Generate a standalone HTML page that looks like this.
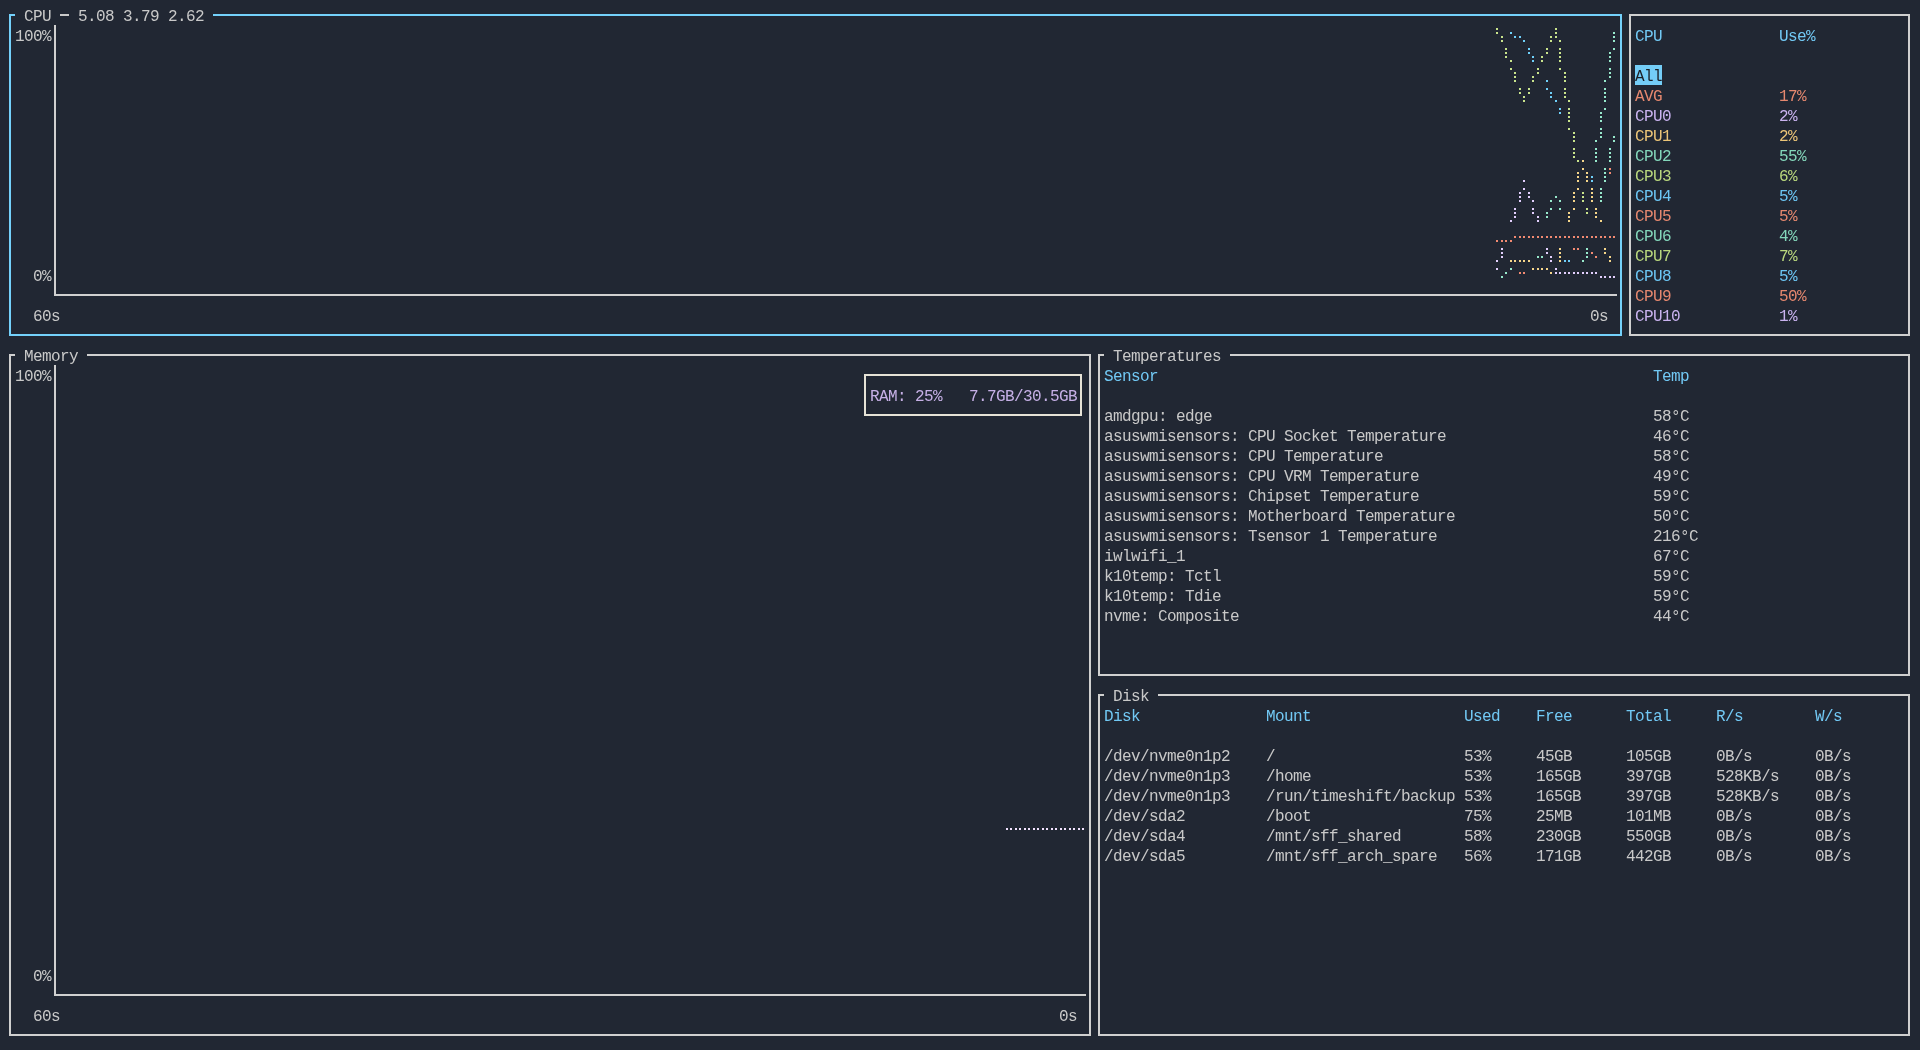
<!DOCTYPE html>
<html><head><meta charset="utf-8"><style>
html,body{margin:0;padding:0;}
body{width:1920px;height:1050px;background:#212733;position:relative;overflow:hidden;font-family:"Liberation Mono",monospace;}
.t{position:absolute;font-size:16px;letter-spacing:-0.6px;line-height:20px;height:20px;white-space:pre;margin-top:2px;transform:translateZ(0)}
.r{position:absolute}
svg{position:absolute;left:0;top:0}
</style></head><body>
<div class="r" style="left:9px;top:14px;width:6px;height:2px;background:#74d1fb"></div><div class="r" style="left:213px;top:14px;width:1409px;height:2px;background:#74d1fb"></div><div class="r" style="left:9px;top:334px;width:1613px;height:2px;background:#74d1fb"></div><div class="r" style="left:9px;top:14px;width:2px;height:322px;background:#74d1fb"></div><div class="r" style="left:1620px;top:14px;width:2px;height:322px;background:#74d1fb"></div><div class="t" style="left:24px;top:5px;color:#c9c9c9">CPU&#160;&#160;&#160;5.08&#160;3.79&#160;2.62</div><div class="r" style="left:60px;top:14px;width:9px;height:2px;background:#c9c9c9"></div><div class="t" style="left:15px;top:25px;color:#c9c9c9">100%</div><div class="t" style="left:33px;top:265px;color:#c9c9c9">0%</div><div class="r" style="left:54px;top:25px;width:2px;height:271px;background:#d0d0d0"></div><div class="r" style="left:54px;top:294px;width:1563px;height:2px;background:#d0d0d0"></div><div class="t" style="left:33px;top:305px;color:#c9c9c9">60s</div><div class="t" style="left:1590px;top:305px;color:#c9c9c9">0s</div><div class="r" style="left:1629px;top:14px;width:281px;height:2px;background:#d0d0d0"></div><div class="r" style="left:1629px;top:334px;width:281px;height:2px;background:#d0d0d0"></div><div class="r" style="left:1629px;top:14px;width:2px;height:322px;background:#d0d0d0"></div><div class="r" style="left:1908px;top:14px;width:2px;height:322px;background:#d0d0d0"></div><div class="t" style="left:1635px;top:25px;color:#72c9f5">CPU</div><div class="t" style="left:1779px;top:25px;color:#72c9f5">Use%</div><div class="r" style="left:1635px;top:65px;width:27px;height:20px;background:#74cdf7"></div><div class="t" style="left:1635px;top:65px;color:#1b1e25">All</div><div class="t" style="left:1635px;top:85px;color:#e6886f">AVG</div><div class="t" style="left:1779px;top:85px;color:#e6886f">17%</div><div class="t" style="left:1635px;top:105px;color:#cab3f0">CPU0</div><div class="t" style="left:1779px;top:105px;color:#cab3f0">2%</div><div class="t" style="left:1635px;top:125px;color:#ecc578">CPU1</div><div class="t" style="left:1779px;top:125px;color:#ecc578">2%</div><div class="t" style="left:1635px;top:145px;color:#84d7bb">CPU2</div><div class="t" style="left:1779px;top:145px;color:#84d7bb">55%</div><div class="t" style="left:1635px;top:165px;color:#bad87e">CPU3</div><div class="t" style="left:1779px;top:165px;color:#bad87e">6%</div><div class="t" style="left:1635px;top:185px;color:#6cc6f4">CPU4</div><div class="t" style="left:1779px;top:185px;color:#6cc6f4">5%</div><div class="t" style="left:1635px;top:205px;color:#e6886f">CPU5</div><div class="t" style="left:1779px;top:205px;color:#e6886f">5%</div><div class="t" style="left:1635px;top:225px;color:#84d7bb">CPU6</div><div class="t" style="left:1779px;top:225px;color:#84d7bb">4%</div><div class="t" style="left:1635px;top:245px;color:#bad87e">CPU7</div><div class="t" style="left:1779px;top:245px;color:#bad87e">7%</div><div class="t" style="left:1635px;top:265px;color:#6cc6f4">CPU8</div><div class="t" style="left:1779px;top:265px;color:#6cc6f4">5%</div><div class="t" style="left:1635px;top:285px;color:#e6886f">CPU9</div><div class="t" style="left:1779px;top:285px;color:#e6886f">50%</div><div class="t" style="left:1635px;top:305px;color:#cab3f0">CPU10</div><div class="t" style="left:1779px;top:305px;color:#cab3f0">1%</div><div class="r" style="left:9px;top:354px;width:6px;height:2px;background:#d0d0d0"></div><div class="r" style="left:87px;top:354px;width:1004px;height:2px;background:#d0d0d0"></div><div class="r" style="left:9px;top:1034px;width:1082px;height:2px;background:#d0d0d0"></div><div class="r" style="left:9px;top:354px;width:2px;height:682px;background:#d0d0d0"></div><div class="r" style="left:1089px;top:354px;width:2px;height:682px;background:#d0d0d0"></div><div class="t" style="left:24px;top:345px;color:#c9c9c9">Memory</div><div class="t" style="left:15px;top:365px;color:#c9c9c9">100%</div><div class="t" style="left:33px;top:965px;color:#c9c9c9">0%</div><div class="r" style="left:54px;top:365px;width:2px;height:631px;background:#d0d0d0"></div><div class="r" style="left:54px;top:994px;width:1032px;height:2px;background:#d0d0d0"></div><div class="t" style="left:33px;top:1005px;color:#c9c9c9">60s</div><div class="t" style="left:1059px;top:1005px;color:#c9c9c9">0s</div><div class="r" style="left:864px;top:374px;width:218px;height:2px;background:#e6e2d6"></div><div class="r" style="left:864px;top:414px;width:218px;height:2px;background:#e6e2d6"></div><div class="r" style="left:864px;top:374px;width:2px;height:42px;background:#e6e2d6"></div><div class="r" style="left:1080px;top:374px;width:2px;height:42px;background:#e6e2d6"></div><div class="t" style="left:870px;top:385px;color:#c6b0e6">RAM:&#160;25%&#160;&#160;&#160;7.7GB/30.5GB</div><div class="r" style="left:1098px;top:354px;width:6px;height:2px;background:#d0d0d0"></div><div class="r" style="left:1230px;top:354px;width:680px;height:2px;background:#d0d0d0"></div><div class="r" style="left:1098px;top:674px;width:812px;height:2px;background:#d0d0d0"></div><div class="r" style="left:1098px;top:354px;width:2px;height:322px;background:#d0d0d0"></div><div class="r" style="left:1908px;top:354px;width:2px;height:322px;background:#d0d0d0"></div><div class="t" style="left:1113px;top:345px;color:#c9c9c9">Temperatures</div><div class="t" style="left:1104px;top:365px;color:#72c9f5">Sensor</div><div class="t" style="left:1653px;top:365px;color:#72c9f5">Temp</div><div class="t" style="left:1104px;top:405px;color:#c9c9c9">amdgpu:&#160;edge</div><div class="t" style="left:1653px;top:405px;color:#c9c9c9">58°C</div><div class="t" style="left:1104px;top:425px;color:#c9c9c9">asuswmisensors:&#160;CPU&#160;Socket&#160;Temperature</div><div class="t" style="left:1653px;top:425px;color:#c9c9c9">46°C</div><div class="t" style="left:1104px;top:445px;color:#c9c9c9">asuswmisensors:&#160;CPU&#160;Temperature</div><div class="t" style="left:1653px;top:445px;color:#c9c9c9">58°C</div><div class="t" style="left:1104px;top:465px;color:#c9c9c9">asuswmisensors:&#160;CPU&#160;VRM&#160;Temperature</div><div class="t" style="left:1653px;top:465px;color:#c9c9c9">49°C</div><div class="t" style="left:1104px;top:485px;color:#c9c9c9">asuswmisensors:&#160;Chipset&#160;Temperature</div><div class="t" style="left:1653px;top:485px;color:#c9c9c9">59°C</div><div class="t" style="left:1104px;top:505px;color:#c9c9c9">asuswmisensors:&#160;Motherboard&#160;Temperature</div><div class="t" style="left:1653px;top:505px;color:#c9c9c9">50°C</div><div class="t" style="left:1104px;top:525px;color:#c9c9c9">asuswmisensors:&#160;Tsensor&#160;1&#160;Temperature</div><div class="t" style="left:1653px;top:525px;color:#c9c9c9">216°C</div><div class="t" style="left:1104px;top:545px;color:#c9c9c9">iwlwifi_1</div><div class="t" style="left:1653px;top:545px;color:#c9c9c9">67°C</div><div class="t" style="left:1104px;top:565px;color:#c9c9c9">k10temp:&#160;Tctl</div><div class="t" style="left:1653px;top:565px;color:#c9c9c9">59°C</div><div class="t" style="left:1104px;top:585px;color:#c9c9c9">k10temp:&#160;Tdie</div><div class="t" style="left:1653px;top:585px;color:#c9c9c9">59°C</div><div class="t" style="left:1104px;top:605px;color:#c9c9c9">nvme:&#160;Composite</div><div class="t" style="left:1653px;top:605px;color:#c9c9c9">44°C</div><div class="r" style="left:1098px;top:694px;width:6px;height:2px;background:#d0d0d0"></div><div class="r" style="left:1158px;top:694px;width:752px;height:2px;background:#d0d0d0"></div><div class="r" style="left:1098px;top:1034px;width:812px;height:2px;background:#d0d0d0"></div><div class="r" style="left:1098px;top:694px;width:2px;height:342px;background:#d0d0d0"></div><div class="r" style="left:1908px;top:694px;width:2px;height:342px;background:#d0d0d0"></div><div class="t" style="left:1113px;top:685px;color:#c9c9c9">Disk</div><div class="t" style="left:1104px;top:705px;color:#72c9f5">Disk</div><div class="t" style="left:1266px;top:705px;color:#72c9f5">Mount</div><div class="t" style="left:1464px;top:705px;color:#72c9f5">Used</div><div class="t" style="left:1536px;top:705px;color:#72c9f5">Free</div><div class="t" style="left:1626px;top:705px;color:#72c9f5">Total</div><div class="t" style="left:1716px;top:705px;color:#72c9f5">R/s</div><div class="t" style="left:1815px;top:705px;color:#72c9f5">W/s</div><div class="t" style="left:1104px;top:745px;color:#c9c9c9">/dev/nvme0n1p2</div><div class="t" style="left:1266px;top:745px;color:#c9c9c9">/</div><div class="t" style="left:1464px;top:745px;color:#c9c9c9">53%</div><div class="t" style="left:1536px;top:745px;color:#c9c9c9">45GB</div><div class="t" style="left:1626px;top:745px;color:#c9c9c9">105GB</div><div class="t" style="left:1716px;top:745px;color:#c9c9c9">0B/s</div><div class="t" style="left:1815px;top:745px;color:#c9c9c9">0B/s</div><div class="t" style="left:1104px;top:765px;color:#c9c9c9">/dev/nvme0n1p3</div><div class="t" style="left:1266px;top:765px;color:#c9c9c9">/home</div><div class="t" style="left:1464px;top:765px;color:#c9c9c9">53%</div><div class="t" style="left:1536px;top:765px;color:#c9c9c9">165GB</div><div class="t" style="left:1626px;top:765px;color:#c9c9c9">397GB</div><div class="t" style="left:1716px;top:765px;color:#c9c9c9">528KB/s</div><div class="t" style="left:1815px;top:765px;color:#c9c9c9">0B/s</div><div class="t" style="left:1104px;top:785px;color:#c9c9c9">/dev/nvme0n1p3</div><div class="t" style="left:1266px;top:785px;color:#c9c9c9">/run/timeshift/backup</div><div class="t" style="left:1464px;top:785px;color:#c9c9c9">53%</div><div class="t" style="left:1536px;top:785px;color:#c9c9c9">165GB</div><div class="t" style="left:1626px;top:785px;color:#c9c9c9">397GB</div><div class="t" style="left:1716px;top:785px;color:#c9c9c9">528KB/s</div><div class="t" style="left:1815px;top:785px;color:#c9c9c9">0B/s</div><div class="t" style="left:1104px;top:805px;color:#c9c9c9">/dev/sda2</div><div class="t" style="left:1266px;top:805px;color:#c9c9c9">/boot</div><div class="t" style="left:1464px;top:805px;color:#c9c9c9">75%</div><div class="t" style="left:1536px;top:805px;color:#c9c9c9">25MB</div><div class="t" style="left:1626px;top:805px;color:#c9c9c9">101MB</div><div class="t" style="left:1716px;top:805px;color:#c9c9c9">0B/s</div><div class="t" style="left:1815px;top:805px;color:#c9c9c9">0B/s</div><div class="t" style="left:1104px;top:825px;color:#c9c9c9">/dev/sda4</div><div class="t" style="left:1266px;top:825px;color:#c9c9c9">/mnt/sff_shared</div><div class="t" style="left:1464px;top:825px;color:#c9c9c9">58%</div><div class="t" style="left:1536px;top:825px;color:#c9c9c9">230GB</div><div class="t" style="left:1626px;top:825px;color:#c9c9c9">550GB</div><div class="t" style="left:1716px;top:825px;color:#c9c9c9">0B/s</div><div class="t" style="left:1815px;top:825px;color:#c9c9c9">0B/s</div><div class="t" style="left:1104px;top:845px;color:#c9c9c9">/dev/sda5</div><div class="t" style="left:1266px;top:845px;color:#c9c9c9">/mnt/sff_arch_spare</div><div class="t" style="left:1464px;top:845px;color:#c9c9c9">56%</div><div class="t" style="left:1536px;top:845px;color:#c9c9c9">171GB</div><div class="t" style="left:1626px;top:845px;color:#c9c9c9">442GB</div><div class="t" style="left:1716px;top:845px;color:#c9c9c9">0B/s</div><div class="t" style="left:1815px;top:845px;color:#c9c9c9">0B/s</div>
<svg width="1920" height="1050"><rect x="1496" y="28" width="2" height="2" fill="#c9e48c"/><rect x="1496" y="32" width="2" height="2" fill="#c9e48c"/><rect x="1501" y="36" width="2" height="2" fill="#c9e48c"/><rect x="1501" y="40" width="2" height="2" fill="#c9e48c"/><rect x="1505" y="48" width="2" height="2" fill="#c9e48c"/><rect x="1505" y="52" width="2" height="2" fill="#c9e48c"/><rect x="1505" y="56" width="2" height="2" fill="#c9e48c"/><rect x="1510" y="60" width="2" height="2" fill="#c9e48c"/><rect x="1510" y="68" width="2" height="2" fill="#c9e48c"/><rect x="1514" y="72" width="2" height="2" fill="#c9e48c"/><rect x="1514" y="76" width="2" height="2" fill="#c9e48c"/><rect x="1514" y="80" width="2" height="2" fill="#c9e48c"/><rect x="1519" y="88" width="2" height="2" fill="#c9e48c"/><rect x="1519" y="92" width="2" height="2" fill="#c9e48c"/><rect x="1523" y="96" width="2" height="2" fill="#c9e48c"/><rect x="1523" y="100" width="2" height="2" fill="#c9e48c"/><rect x="1528" y="88" width="2" height="2" fill="#c9e48c"/><rect x="1528" y="92" width="2" height="2" fill="#c9e48c"/><rect x="1532" y="76" width="2" height="2" fill="#c9e48c"/><rect x="1532" y="80" width="2" height="2" fill="#c9e48c"/><rect x="1537" y="68" width="2" height="2" fill="#c9e48c"/><rect x="1537" y="72" width="2" height="2" fill="#c9e48c"/><rect x="1541" y="56" width="2" height="2" fill="#c9e48c"/><rect x="1541" y="60" width="2" height="2" fill="#c9e48c"/><rect x="1546" y="48" width="2" height="2" fill="#c9e48c"/><rect x="1546" y="52" width="2" height="2" fill="#c9e48c"/><rect x="1550" y="36" width="2" height="2" fill="#c9e48c"/><rect x="1550" y="40" width="2" height="2" fill="#c9e48c"/><rect x="1555" y="28" width="2" height="2" fill="#c9e48c"/><rect x="1555" y="32" width="2" height="2" fill="#c9e48c"/><rect x="1555" y="36" width="2" height="2" fill="#c9e48c"/><rect x="1559" y="40" width="2" height="2" fill="#c9e48c"/><rect x="1559" y="48" width="2" height="2" fill="#c9e48c"/><rect x="1559" y="52" width="2" height="2" fill="#c9e48c"/><rect x="1559" y="56" width="2" height="2" fill="#c9e48c"/><rect x="1559" y="60" width="2" height="2" fill="#c9e48c"/><rect x="1559" y="68" width="2" height="2" fill="#c9e48c"/><rect x="1564" y="72" width="2" height="2" fill="#c9e48c"/><rect x="1564" y="76" width="2" height="2" fill="#c9e48c"/><rect x="1564" y="80" width="2" height="2" fill="#c9e48c"/><rect x="1564" y="88" width="2" height="2" fill="#c9e48c"/><rect x="1564" y="92" width="2" height="2" fill="#c9e48c"/><rect x="1564" y="96" width="2" height="2" fill="#c9e48c"/><rect x="1568" y="100" width="2" height="2" fill="#c9e48c"/><rect x="1568" y="108" width="2" height="2" fill="#c9e48c"/><rect x="1568" y="112" width="2" height="2" fill="#c9e48c"/><rect x="1568" y="116" width="2" height="2" fill="#c9e48c"/><rect x="1568" y="120" width="2" height="2" fill="#c9e48c"/><rect x="1568" y="128" width="2" height="2" fill="#c9e48c"/><rect x="1573" y="132" width="2" height="2" fill="#c9e48c"/><rect x="1573" y="136" width="2" height="2" fill="#c9e48c"/><rect x="1573" y="140" width="2" height="2" fill="#c9e48c"/><rect x="1573" y="148" width="2" height="2" fill="#c9e48c"/><rect x="1573" y="152" width="2" height="2" fill="#c9e48c"/><rect x="1573" y="156" width="2" height="2" fill="#c9e48c"/><rect x="1577" y="160" width="2" height="2" fill="#c9e48c"/><rect x="1582" y="192" width="2" height="2" fill="#c9e48c"/><rect x="1582" y="196" width="2" height="2" fill="#c9e48c"/><rect x="1582" y="200" width="2" height="2" fill="#c9e48c"/><rect x="1586" y="208" width="2" height="2" fill="#c9e48c"/><rect x="1586" y="212" width="2" height="2" fill="#c9e48c"/><rect x="1510" y="32" width="2" height="2" fill="#6fd0fa"/><rect x="1514" y="36" width="2" height="2" fill="#6fd0fa"/><rect x="1519" y="36" width="2" height="2" fill="#6fd0fa"/><rect x="1523" y="40" width="2" height="2" fill="#6fd0fa"/><rect x="1528" y="48" width="2" height="2" fill="#6fd0fa"/><rect x="1528" y="52" width="2" height="2" fill="#6fd0fa"/><rect x="1532" y="56" width="2" height="2" fill="#6fd0fa"/><rect x="1532" y="60" width="2" height="2" fill="#6fd0fa"/><rect x="1546" y="80" width="2" height="2" fill="#6fd0fa"/><rect x="1546" y="88" width="2" height="2" fill="#6fd0fa"/><rect x="1550" y="92" width="2" height="2" fill="#6fd0fa"/><rect x="1550" y="96" width="2" height="2" fill="#6fd0fa"/><rect x="1555" y="100" width="2" height="2" fill="#6fd0fa"/><rect x="1559" y="108" width="2" height="2" fill="#6fd0fa"/><rect x="1559" y="112" width="2" height="2" fill="#6fd0fa"/><rect x="1591" y="176" width="2" height="2" fill="#6fd0fa"/><rect x="1591" y="180" width="2" height="2" fill="#6fd0fa"/><rect x="1564" y="260" width="2" height="2" fill="#6fd0fa"/><rect x="1568" y="260" width="2" height="2" fill="#6fd0fa"/><rect x="1613" y="32" width="2" height="2" fill="#97e9cc"/><rect x="1613" y="36" width="2" height="2" fill="#97e9cc"/><rect x="1613" y="40" width="2" height="2" fill="#97e9cc"/><rect x="1613" y="48" width="2" height="2" fill="#97e9cc"/><rect x="1609" y="52" width="2" height="2" fill="#97e9cc"/><rect x="1609" y="56" width="2" height="2" fill="#97e9cc"/><rect x="1609" y="60" width="2" height="2" fill="#97e9cc"/><rect x="1609" y="68" width="2" height="2" fill="#97e9cc"/><rect x="1609" y="72" width="2" height="2" fill="#97e9cc"/><rect x="1609" y="76" width="2" height="2" fill="#97e9cc"/><rect x="1604" y="80" width="2" height="2" fill="#97e9cc"/><rect x="1604" y="88" width="2" height="2" fill="#97e9cc"/><rect x="1604" y="92" width="2" height="2" fill="#97e9cc"/><rect x="1604" y="96" width="2" height="2" fill="#97e9cc"/><rect x="1604" y="100" width="2" height="2" fill="#97e9cc"/><rect x="1604" y="108" width="2" height="2" fill="#97e9cc"/><rect x="1600" y="112" width="2" height="2" fill="#97e9cc"/><rect x="1600" y="116" width="2" height="2" fill="#97e9cc"/><rect x="1600" y="120" width="2" height="2" fill="#97e9cc"/><rect x="1600" y="128" width="2" height="2" fill="#97e9cc"/><rect x="1600" y="132" width="2" height="2" fill="#97e9cc"/><rect x="1600" y="136" width="2" height="2" fill="#97e9cc"/><rect x="1595" y="140" width="2" height="2" fill="#97e9cc"/><rect x="1595" y="148" width="2" height="2" fill="#97e9cc"/><rect x="1595" y="152" width="2" height="2" fill="#97e9cc"/><rect x="1595" y="156" width="2" height="2" fill="#97e9cc"/><rect x="1595" y="160" width="2" height="2" fill="#97e9cc"/><rect x="1613" y="136" width="2" height="2" fill="#97e9cc"/><rect x="1613" y="140" width="2" height="2" fill="#97e9cc"/><rect x="1609" y="148" width="2" height="2" fill="#97e9cc"/><rect x="1609" y="152" width="2" height="2" fill="#97e9cc"/><rect x="1609" y="156" width="2" height="2" fill="#97e9cc"/><rect x="1609" y="160" width="2" height="2" fill="#97e9cc"/><rect x="1604" y="168" width="2" height="2" fill="#97e9cc"/><rect x="1604" y="172" width="2" height="2" fill="#97e9cc"/><rect x="1604" y="176" width="2" height="2" fill="#97e9cc"/><rect x="1604" y="180" width="2" height="2" fill="#97e9cc"/><rect x="1550" y="200" width="2" height="2" fill="#97e9cc"/><rect x="1550" y="208" width="2" height="2" fill="#97e9cc"/><rect x="1546" y="212" width="2" height="2" fill="#97e9cc"/><rect x="1546" y="216" width="2" height="2" fill="#97e9cc"/><rect x="1537" y="256" width="2" height="2" fill="#97e9cc"/><rect x="1541" y="256" width="2" height="2" fill="#97e9cc"/><rect x="1600" y="188" width="2" height="2" fill="#97e9cc"/><rect x="1600" y="192" width="2" height="2" fill="#97e9cc"/><rect x="1600" y="196" width="2" height="2" fill="#97e9cc"/><rect x="1600" y="200" width="2" height="2" fill="#97e9cc"/><rect x="1555" y="196" width="2" height="2" fill="#97e9cc"/><rect x="1559" y="200" width="2" height="2" fill="#97e9cc"/><rect x="1559" y="208" width="2" height="2" fill="#97e9cc"/><rect x="1586" y="248" width="2" height="2" fill="#97e9cc"/><rect x="1586" y="252" width="2" height="2" fill="#97e9cc"/><rect x="1586" y="256" width="2" height="2" fill="#97e9cc"/><rect x="1582" y="260" width="2" height="2" fill="#97e9cc"/><rect x="1510" y="268" width="2" height="2" fill="#97e9cc"/><rect x="1505" y="272" width="2" height="2" fill="#97e9cc"/><rect x="1501" y="276" width="2" height="2" fill="#97e9cc"/><rect x="1582" y="160" width="2" height="2" fill="#f6d68a"/><rect x="1582" y="168" width="2" height="2" fill="#f6d68a"/><rect x="1577" y="172" width="2" height="2" fill="#f6d68a"/><rect x="1577" y="176" width="2" height="2" fill="#f6d68a"/><rect x="1577" y="180" width="2" height="2" fill="#f6d68a"/><rect x="1586" y="172" width="2" height="2" fill="#f6d68a"/><rect x="1586" y="176" width="2" height="2" fill="#f6d68a"/><rect x="1586" y="180" width="2" height="2" fill="#f6d68a"/><rect x="1510" y="260" width="2" height="2" fill="#f6d68a"/><rect x="1514" y="260" width="2" height="2" fill="#f6d68a"/><rect x="1519" y="260" width="2" height="2" fill="#f6d68a"/><rect x="1523" y="260" width="2" height="2" fill="#f6d68a"/><rect x="1528" y="260" width="2" height="2" fill="#f6d68a"/><rect x="1577" y="188" width="2" height="2" fill="#f6d68a"/><rect x="1573" y="192" width="2" height="2" fill="#f6d68a"/><rect x="1573" y="196" width="2" height="2" fill="#f6d68a"/><rect x="1573" y="200" width="2" height="2" fill="#f6d68a"/><rect x="1573" y="208" width="2" height="2" fill="#f6d68a"/><rect x="1568" y="212" width="2" height="2" fill="#f6d68a"/><rect x="1568" y="216" width="2" height="2" fill="#f6d68a"/><rect x="1568" y="220" width="2" height="2" fill="#f6d68a"/><rect x="1591" y="188" width="2" height="2" fill="#f6d68a"/><rect x="1591" y="192" width="2" height="2" fill="#f6d68a"/><rect x="1591" y="196" width="2" height="2" fill="#f6d68a"/><rect x="1591" y="200" width="2" height="2" fill="#f6d68a"/><rect x="1595" y="208" width="2" height="2" fill="#f6d68a"/><rect x="1595" y="212" width="2" height="2" fill="#f6d68a"/><rect x="1595" y="216" width="2" height="2" fill="#f6d68a"/><rect x="1600" y="220" width="2" height="2" fill="#f6d68a"/><rect x="1559" y="248" width="2" height="2" fill="#f6d68a"/><rect x="1559" y="252" width="2" height="2" fill="#f6d68a"/><rect x="1559" y="256" width="2" height="2" fill="#f6d68a"/><rect x="1559" y="260" width="2" height="2" fill="#f6d68a"/><rect x="1604" y="248" width="2" height="2" fill="#f6d68a"/><rect x="1604" y="252" width="2" height="2" fill="#f6d68a"/><rect x="1609" y="256" width="2" height="2" fill="#f6d68a"/><rect x="1609" y="260" width="2" height="2" fill="#f6d68a"/><rect x="1532" y="268" width="2" height="2" fill="#f6d68a"/><rect x="1537" y="268" width="2" height="2" fill="#f6d68a"/><rect x="1541" y="268" width="2" height="2" fill="#f6d68a"/><rect x="1546" y="268" width="2" height="2" fill="#f6d68a"/><rect x="1550" y="272" width="2" height="2" fill="#f6d68a"/><rect x="1609" y="168" width="2" height="2" fill="#f28a72"/><rect x="1609" y="172" width="2" height="2" fill="#f28a72"/><rect x="1514" y="236" width="2" height="2" fill="#f28a72"/><rect x="1519" y="236" width="2" height="2" fill="#f28a72"/><rect x="1523" y="236" width="2" height="2" fill="#f28a72"/><rect x="1528" y="236" width="2" height="2" fill="#f28a72"/><rect x="1532" y="236" width="2" height="2" fill="#f28a72"/><rect x="1537" y="236" width="2" height="2" fill="#f28a72"/><rect x="1541" y="236" width="2" height="2" fill="#f28a72"/><rect x="1546" y="236" width="2" height="2" fill="#f28a72"/><rect x="1550" y="236" width="2" height="2" fill="#f28a72"/><rect x="1555" y="236" width="2" height="2" fill="#f28a72"/><rect x="1559" y="236" width="2" height="2" fill="#f28a72"/><rect x="1564" y="236" width="2" height="2" fill="#f28a72"/><rect x="1568" y="236" width="2" height="2" fill="#f28a72"/><rect x="1573" y="236" width="2" height="2" fill="#f28a72"/><rect x="1577" y="236" width="2" height="2" fill="#f28a72"/><rect x="1582" y="236" width="2" height="2" fill="#f28a72"/><rect x="1586" y="236" width="2" height="2" fill="#f28a72"/><rect x="1591" y="236" width="2" height="2" fill="#f28a72"/><rect x="1595" y="236" width="2" height="2" fill="#f28a72"/><rect x="1600" y="236" width="2" height="2" fill="#f28a72"/><rect x="1604" y="236" width="2" height="2" fill="#f28a72"/><rect x="1609" y="236" width="2" height="2" fill="#f28a72"/><rect x="1613" y="236" width="2" height="2" fill="#f28a72"/><rect x="1496" y="240" width="2" height="2" fill="#f28a72"/><rect x="1501" y="240" width="2" height="2" fill="#f28a72"/><rect x="1505" y="240" width="2" height="2" fill="#f28a72"/><rect x="1510" y="240" width="2" height="2" fill="#f28a72"/><rect x="1573" y="248" width="2" height="2" fill="#f28a72"/><rect x="1577" y="248" width="2" height="2" fill="#f28a72"/><rect x="1591" y="252" width="2" height="2" fill="#f28a72"/><rect x="1595" y="256" width="2" height="2" fill="#f28a72"/><rect x="1519" y="272" width="2" height="2" fill="#f28a72"/><rect x="1523" y="272" width="2" height="2" fill="#f28a72"/><rect x="1523" y="180" width="2" height="2" fill="#e2cffd"/><rect x="1523" y="188" width="2" height="2" fill="#e2cffd"/><rect x="1519" y="192" width="2" height="2" fill="#e2cffd"/><rect x="1519" y="196" width="2" height="2" fill="#e2cffd"/><rect x="1519" y="200" width="2" height="2" fill="#e2cffd"/><rect x="1528" y="192" width="2" height="2" fill="#e2cffd"/><rect x="1528" y="196" width="2" height="2" fill="#e2cffd"/><rect x="1532" y="200" width="2" height="2" fill="#e2cffd"/><rect x="1514" y="208" width="2" height="2" fill="#e2cffd"/><rect x="1514" y="212" width="2" height="2" fill="#e2cffd"/><rect x="1514" y="216" width="2" height="2" fill="#e2cffd"/><rect x="1510" y="220" width="2" height="2" fill="#e2cffd"/><rect x="1532" y="208" width="2" height="2" fill="#e2cffd"/><rect x="1532" y="212" width="2" height="2" fill="#e2cffd"/><rect x="1537" y="216" width="2" height="2" fill="#e2cffd"/><rect x="1537" y="220" width="2" height="2" fill="#e2cffd"/><rect x="1501" y="248" width="2" height="2" fill="#e2cffd"/><rect x="1501" y="252" width="2" height="2" fill="#e2cffd"/><rect x="1501" y="256" width="2" height="2" fill="#e2cffd"/><rect x="1496" y="260" width="2" height="2" fill="#e2cffd"/><rect x="1546" y="248" width="2" height="2" fill="#e2cffd"/><rect x="1546" y="252" width="2" height="2" fill="#e2cffd"/><rect x="1550" y="256" width="2" height="2" fill="#e2cffd"/><rect x="1550" y="260" width="2" height="2" fill="#e2cffd"/><rect x="1496" y="268" width="2" height="2" fill="#e2cffd"/><rect x="1555" y="268" width="2" height="2" fill="#e2cffd"/><rect x="1555" y="272" width="2" height="2" fill="#e2cffd"/><rect x="1559" y="272" width="2" height="2" fill="#e2cffd"/><rect x="1564" y="272" width="2" height="2" fill="#e2cffd"/><rect x="1568" y="272" width="2" height="2" fill="#e2cffd"/><rect x="1573" y="272" width="2" height="2" fill="#e2cffd"/><rect x="1577" y="272" width="2" height="2" fill="#e2cffd"/><rect x="1582" y="272" width="2" height="2" fill="#e2cffd"/><rect x="1586" y="272" width="2" height="2" fill="#e2cffd"/><rect x="1591" y="272" width="2" height="2" fill="#e2cffd"/><rect x="1595" y="272" width="2" height="2" fill="#e2cffd"/><rect x="1600" y="276" width="2" height="2" fill="#e2cffd"/><rect x="1604" y="276" width="2" height="2" fill="#e2cffd"/><rect x="1609" y="276" width="2" height="2" fill="#e2cffd"/><rect x="1613" y="276" width="2" height="2" fill="#e2cffd"/><rect x="1006" y="828" width="2" height="2" fill="#f1e2ff"/><rect x="1010" y="828" width="2" height="2" fill="#f1e2ff"/><rect x="1015" y="828" width="2" height="2" fill="#f1e2ff"/><rect x="1019" y="828" width="2" height="2" fill="#f1e2ff"/><rect x="1024" y="828" width="2" height="2" fill="#f1e2ff"/><rect x="1028" y="828" width="2" height="2" fill="#f1e2ff"/><rect x="1033" y="828" width="2" height="2" fill="#f1e2ff"/><rect x="1037" y="828" width="2" height="2" fill="#f1e2ff"/><rect x="1042" y="828" width="2" height="2" fill="#f1e2ff"/><rect x="1046" y="828" width="2" height="2" fill="#f1e2ff"/><rect x="1051" y="828" width="2" height="2" fill="#f1e2ff"/><rect x="1055" y="828" width="2" height="2" fill="#f1e2ff"/><rect x="1060" y="828" width="2" height="2" fill="#f1e2ff"/><rect x="1064" y="828" width="2" height="2" fill="#f1e2ff"/><rect x="1069" y="828" width="2" height="2" fill="#f1e2ff"/><rect x="1073" y="828" width="2" height="2" fill="#f1e2ff"/><rect x="1078" y="828" width="2" height="2" fill="#f1e2ff"/><rect x="1082" y="828" width="2" height="2" fill="#f1e2ff"/></svg>
</body></html>
